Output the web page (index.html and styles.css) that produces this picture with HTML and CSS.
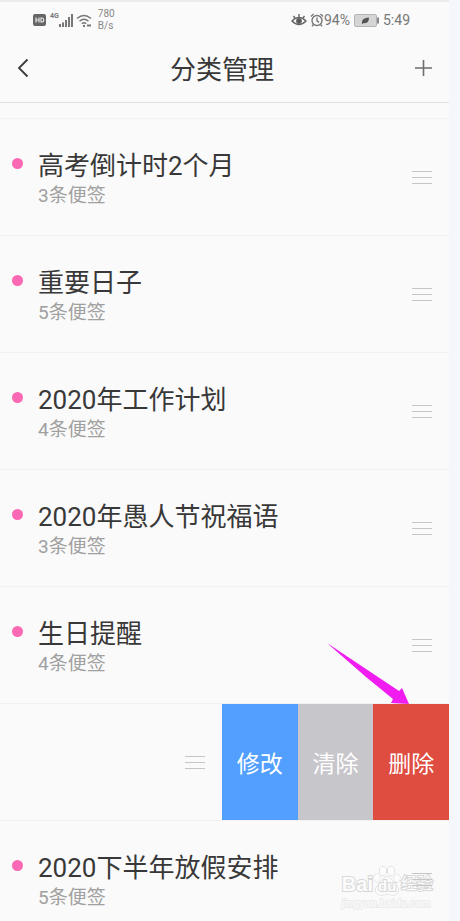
FILE: index.html
```html
<!DOCTYPE html>
<html lang="zh-CN">
<head>
<meta charset="utf-8">
<meta name="viewport" content="width=device-width, initial-scale=1">
<title>分类管理</title>
<link rel="stylesheet" href="styles.css">
</head>
<body>
<div class="screen">
  <div class="status">
    <div class="status-side">
      <svg class="hd" width="14" height="12" viewBox="0 0 14 12"><rect width="13" height="12" rx="2" fill="#666"/><path d="M3 3.5v5M6 3.5v5M3 6h3M8 4v4h1.2q1.6 0 1.6-2t-1.6-2z" fill="none" stroke="#eee" stroke-width="1.1"/></svg>
      <span class="net">4G</span>
      <svg class="bars" width="14" height="13" viewBox="0 0 14 13"><path d="M1 10v3M4 8.500v4.500M7 6v7M10 3v10M13 0v13" stroke="#777" stroke-width="2"/></svg>
      <svg class="wifi" width="17" height="13" viewBox="0 0 17 13" fill="none" stroke="#777" stroke-width="1.500"><path d="M1 4.500q7-6 14 0M3.500 7.200q4.500-4 9 0M5.800 9.800q2.200-2 4.400 0"/><path d="M7 12h2M11 11.500h4" stroke-width="2"/></svg>
      <span class="speed">780<br>B/s</span>
    </div>
    <div class="status-side">
      <svg width="16" height="14" viewBox="0 0 16 14" fill="none" stroke="#666" stroke-width="1.400"><path d="M1 8q7-7 14 0-7 7-14 0zM2.500 3l1.500 2M8 1v3M13.500 3L12 5"/><circle cx="8" cy="8" r="2.200" fill="#555"/></svg>
      <svg class="alarm" width="14" height="14" viewBox="0 0 14 14" fill="none" stroke="#777" stroke-width="1.400"><circle cx="7" cy="7.500" r="5"/><path d="M7 4.500v3.300l2 1.600M1 3.500L3.500 1M13 3.500L10.500 1M3.500 11.500L2 13.300M10.500 11.500l1.500 1.800"/></svg>
      <span>94%</span>
      <svg class="battery" width="26" height="13" viewBox="0 0 26 13"><rect x=".5" y=".5" width="22" height="12" rx="1.500" fill="#d5d5d5" stroke="#b4b4b4"/><path d="M24 3.500v6" stroke="#888" stroke-width="2"/><path d="M8 9.500q-1-5.500 7-6 0 6.500-5.500 5.500L8 10.500z" fill="#555"/></svg>
      <span>5:49</span>
    </div>
  </div>
  <header class="bar">
    <button class="icon-btn" aria-label="返回"><svg width="12" height="20" viewBox="0 0 12 20"><path d="M10.500 1.500L2 10l8.500 8.500" fill="none" stroke="#3a3a3a" stroke-width="1.800"/></svg></button>
    <h1>分类管理</h1>
    <button class="icon-btn" aria-label="添加"><svg width="17" height="16" viewBox="0 0 17 16"><path d="M8.500 0v16M0 8h17" stroke="#6e6e6e" stroke-width="1.600"/></svg></button>
  </header>
  <ul class="list">
    <li class="row"><i class="dot"></i><div class="text"><h2>高考倒计时2个月</h2><p>3条便签</p></div><button class="handle" aria-label="排序"><i></i></button></li>
    <li class="row"><i class="dot"></i><div class="text"><h2>重要日子</h2><p>5条便签</p></div><button class="handle" aria-label="排序"><i></i></button></li>
    <li class="row"><i class="dot"></i><div class="text"><h2>2020年工作计划</h2><p>4条便签</p></div><button class="handle" aria-label="排序"><i></i></button></li>
    <li class="row"><i class="dot"></i><div class="text"><h2>2020年愚人节祝福语</h2><p>3条便签</p></div><button class="handle" aria-label="排序"><i></i></button></li>
    <li class="row"><i class="dot"></i><div class="text"><h2>生日提醒</h2><p>4条便签</p></div><button class="handle" aria-label="排序"><i></i></button></li>
    <li class="row swiped">
      <button class="handle" aria-label="排序"><i></i></button>
      <div class="actions">
        <button class="edit">修改</button><button class="clear">清除</button><button class="delete">删除</button>
      </div>
      <svg class="arrow" width="84" height="62" viewBox="0 0 84 62"><path d="M1 0L73 48 76 45 83 61 65 60 67 56 40 34z" fill="#f01cf0"/></svg>
    </li>
    <li class="row"><i class="dot"></i><div class="text"><h2>2020下半年放假安排</h2><p>5条便签</p></div><button class="handle" aria-label="排序"><i></i></button>
      <div class="watermark">
        <div class="brand"><span>Bai</span><span class="paw"><svg width="28" height="30" viewBox="0 0 28 30" fill="#fcfcfc" stroke="#d0d0d0" stroke-width="1"><ellipse cx="4" cy="12" rx="3" ry="4"/><ellipse cx="10" cy="5" rx="3.300" ry="4.500"/><ellipse cx="18" cy="5" rx="3.300" ry="4.500"/><ellipse cx="24" cy="12" rx="3" ry="4"/><path d="M14 11c4 0 5 4 8 7 5 4 4 11-2 11-3 0-4-1-6-1s-3 1-6 1c-6 0-7-7-2-11 3-3 4-7 8-7z"/></svg><b>du</b></span><span class="cn">经验</span></div>
        <div class="site">jingyan.baidu.com</div>
      </div>
    </li>
  </ul>
</div>
</body>
</html>
```
FILE: styles.css
```css
* { box-sizing: border-box; }
body {
  margin: 0;
  min-height: 100vh;
  padding-right: 11px;
  overflow: hidden;
  background: #f5f7fa;
  color: #383838;
  font-family: Roboto, "Noto Sans CJK SC", sans-serif;
}
h1, h2, p, ul { margin: 0; padding: 0; font-weight: 400; }
ul { list-style: none; }
svg { display: block; flex: none; }
button { border: 0; padding: 0; background: none; font: inherit; color: inherit; }

.screen {
  height: 100vh;
  overflow: hidden;
  background: #fafafa;
  border-top: 2px solid #ececec;
}
.status {
  display: flex;
  justify-content: space-between;
  height: 36px;
  padding: 0 39px 0 33px;
  color: #777;
  font-size: 14px;
}
.status-side { display: flex; align-items: center; }
.net { align-self: flex-start; margin: 10px 0 0 3px; font-size: 7px; line-height: 8px; font-weight: 700; }
.wifi { margin-left: 3px; }
.speed { margin-left: 5px; font-size: 10px; line-height: 12px; color: #888; }
.alarm { margin-left: 3px; }
.battery { margin: 0 3px 0 4px; }

.bar {
  display: flex;
  align-items: center;
  justify-content: space-between;
  height: 65px;
  padding: 0 17px 4px;
  border-bottom: 1px solid #e2e2e2;
}
.icon-btn { display: flex; }
h1 { padding-top: 4px; font-size: 26px; line-height: 36px; }

.list { margin-top: 15px; }
.row {
  position: relative;
  display: flex;
  align-items: center;
  height: 117px;
  padding: 0 17px 0 12px;
  border-top: 1px solid #f2f2f2;
}
.dot {
  align-self: flex-start;
  width: 11px;
  height: 11px;
  margin-top: 39px;
  border-radius: 50%;
  background: #fb68b3;
}
.text { flex: 1; margin-left: 15px; padding-top: 4px; }
h2 { font-size: 26px; line-height: 34px; }
p { font-size: 19px; line-height: 26px; color: #a0a0a0; }
.handle { width: 20px; z-index: 1; }
.handle i {
  display: block;
  height: 13px;
  border: solid #c6c6c6;
  border-width: 1px 0;
  background: linear-gradient(#c6c6c6, #c6c6c6) center / 100% 1px no-repeat;
}
.swiped { justify-content: flex-end; gap: 17px; padding: 0; }
.actions { display: flex; align-self: stretch; width: 227px; z-index: 1; }
.actions button { flex: 1; color: #fff; font-size: 23px; }
.edit { background: #539fff; }
.clear { background: #c7c6cb; }
.delete { background: #df4c40; }
.arrow { position: absolute; right: 39px; bottom: 115px; z-index: 2; }

.watermark {
  position: absolute;
  right: 16px;
  top: 45px;
  white-space: nowrap;
  color: #fcfcfc;
  font-family: "Liberation Sans", "Noto Sans CJK SC", sans-serif;
  -webkit-text-stroke: 2px #d8d8d8;
  paint-order: stroke fill;
}
.brand { display: flex; align-items: flex-end; font-size: 20px; line-height: 24px; font-weight: 700; }
.paw { position: relative; }
.paw b { position: absolute; left: 5px; bottom: 1px; font-size: 15px; line-height: 18px; }
.cn { font-size: 16px; line-height: 24px; font-weight: 400; }
.site { font-size: 11px; line-height: 14px; -webkit-text-stroke: 2px #ececec; }
```
